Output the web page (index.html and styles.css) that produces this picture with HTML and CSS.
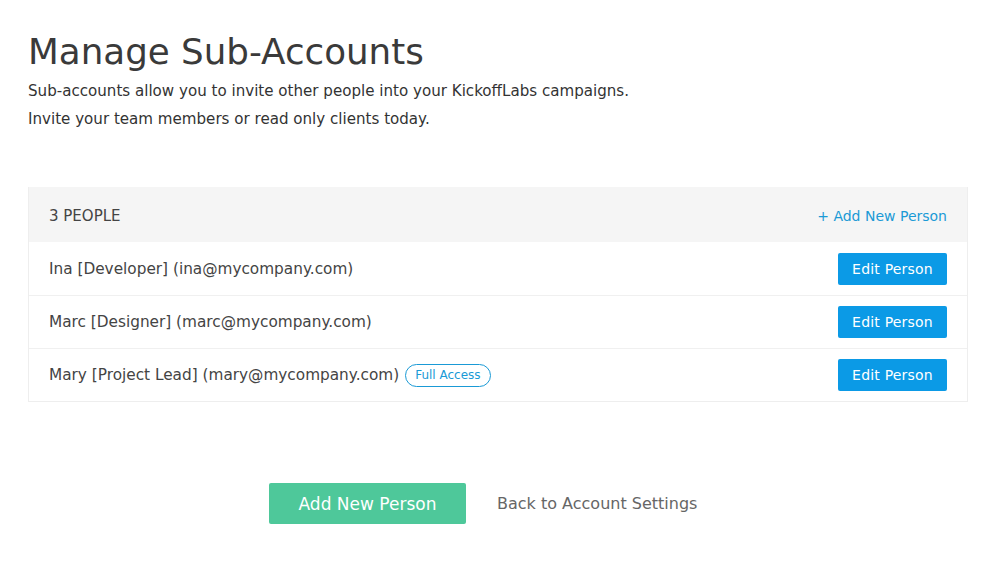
FILE: index.html
```html
<!DOCTYPE html>
<html>
<head>
<meta charset="utf-8">
<link rel="stylesheet" href="styles.css">
</head>
<body>
<div class="page">
  <h1 class="title">Manage Sub-Accounts</h1>
  <p class="intro">Sub-accounts allow you to invite other people into your KickoffLabs campaigns.</p>
  <p class="intro">Invite your team members or read only clients today.</p>

  <div class="panel">
    <div class="panel-head">
      <span class="count">3 PEOPLE</span>
      <a class="add-link">+ Add New Person</a>
    </div>
    <div class="row">
      <span class="person">Ina [Developer] (ina@mycompany.com)</span>
      <a class="edit-btn">Edit Person</a>
    </div>
    <div class="row">
      <span class="person">Marc [Designer] (marc@mycompany.com)</span>
      <a class="edit-btn">Edit Person</a>
    </div>
    <div class="row">
      <span class="person">Mary [Project Lead] (mary@mycompany.com) <span class="badge">Full Access</span></span>
      <a class="edit-btn">Edit Person</a>
    </div>
  </div>

  <div class="actions">
    <a class="primary-btn">Add New Person</a>
    <a class="back-link">Back to Account Settings</a>
  </div>
</div>
</body>
</html>
```
FILE: styles.css
```css
html, body {
  margin: 0;
  padding: 0;
  background: #fff;
}
body {
  font-family: "DejaVu Sans", Verdana, sans-serif;
  color: #333;
}
.page {
  padding: 30px 34px 0 28px;
}
.title {
  font-size: 35.7px;
  font-weight: normal;
  color: #3a3a3a;
  margin: 0 0 3px 0;
  line-height: 44px;
}
.intro {
  font-size: 15.1px;
  line-height: 28px;
  margin: 0;
  color: #333;
}
.panel {
  margin-top: 54px;
  border: 1px solid #eeeeee;
  border-top: none;
}
.panel-head {
  background: #f5f5f5;
  height: 55px;
  box-sizing: border-box;
  padding: 3px 20px 0 20px;
  display: flex;
  align-items: center;
  justify-content: space-between;
}
.count {
  font-size: 15px;
  color: #444;
}
.add-link {
  font-size: 14px;
  color: #1a9ad6;
}
.row {
  height: 52px;
  display: flex;
  align-items: center;
  justify-content: space-between;
  padding: 0 20px;
  border-top: 1px solid #f0f0f0;
}
.row:nth-child(2) { border-top: none; height: 53px; }
.person {
  font-size: 15.3px;
  color: #444;
  display: flex;
  align-items: center;
  gap: 6px;
}
.badge {
  font-size: 12px;
  color: #1a9ad6;
  border: 1px solid #1a9ad6;
  border-radius: 12px;
  padding: 3px 9px;
  line-height: 15px;
}
.edit-btn {
  background: #0b9ae6;
  color: #fff;
  font-size: 14px;
  height: 32px;
  width: 109px;
  display: flex;
  align-items: center;
  justify-content: center;
  border-radius: 2px;
  letter-spacing: 0.2px;
}
.actions {
  margin-top: 81px;
  display: flex;
  align-items: center;
  padding-left: 241px;
  gap: 31px;
}
.primary-btn {
  background: #4ec89a;
  color: #fff;
  font-size: 17px;
  width: 197px;
  height: 41px;
  display: flex;
  align-items: center;
  justify-content: center;
  border-radius: 2px;
}
.back-link {
  font-size: 16px;
  color: #666;
}
```
